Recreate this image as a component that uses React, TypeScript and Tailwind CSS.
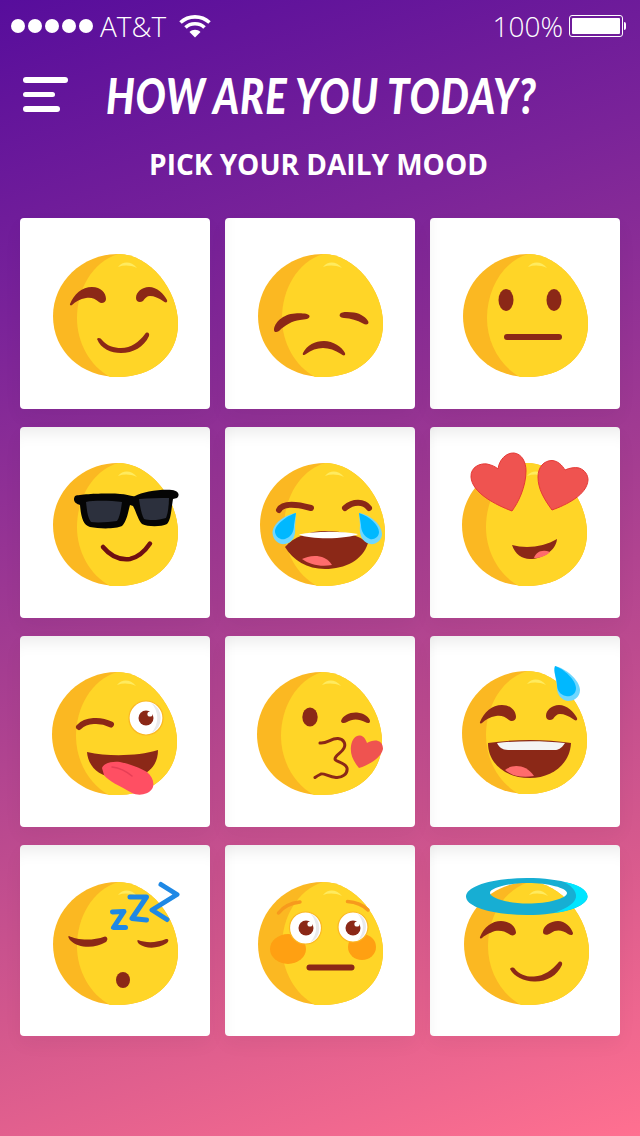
import React from "react";

const BROWN = "#8B2817";
const HAPPY_LEFT =
  "M50 86C54 76 62 69 72 69C81 69 86 75 86 81C86 85 81 86 79 84C75 80 70 79 66 80C60 81 55 84 52 87C51 88 49.500 87 50 86Z";
const HAPPY_RIGHT =
  "M116 80C116 74 122 69 129 69C137 69 144 76 147 82C148 85 145 85 143 83C139 80 134 78 130 78C127 78 125 80 123 83C120 85 116 84 116 80Z";

const Face = ({ x = 0, y = 0 }: { x?: number; y?: number }) => (
  <g transform={`translate(${x} ${y})`}>
    <path
      d="M98 36C130 36 158 72 158 106C158 138 132 159 98 159C62 159 33 134 33 98C33 64 62 36 98 36Z"
      fill="#FBB822"
    />
    <path
      d="M98 36C130 36 158 72 158 106C158 138 132 159 98 159L90 159C70 148 57 125 57 100C57 72 72 44 98 36Z"
      fill="#FFD527"
    />
    <path d="M98 49C103 43 111 43 117 50C110 47 104 47 98 49Z" fill="#FFEB5F" />
  </g>
);

const Eye = ({ cx, cy, r, px, py }: { cx: number; cy: number; r: number; px: number; py: number }) => (
  <g>
    <circle cx={cx} cy={cy} r={r} fill="#fff" stroke="#FBB822" strokeWidth="1.2" />
    <path
      d={`M${cx + r * 0.3} ${cy - r * 0.9}A${r} ${r} 0 0 1 ${cx + r * 0.3} ${cy + r * 0.9}A${r * 1.3} ${r * 1.3} 0 0 0 ${cx + r * 0.3} ${cy - r * 0.9}Z`}
      fill="#E9E9EB"
    />
    <circle cx={px} cy={py} r="7.500" fill={BROWN} />
    <circle cx={px + 4} cy={py - 4} r="2.600" fill="#fff" />
  </g>
);

const Card = ({ shade, children }: { shade: string; children: React.ReactNode }) => (
  <div className={`h-[191px] rounded-[4px] bg-white ${shade}`}>
    <svg viewBox="0 0 190 191" className="block h-[191px] w-[190px]">
      {children}
    </svg>
  </div>
);

const SHADE_FIRST = "shadow-[0_8px_20px_rgba(0,0,0,0.04)]";
const SHADE_SIDE = "shadow-[inset_14px_0_14px_-14px_rgba(0,0,0,0.05),0_8px_20px_rgba(0,0,0,0.04)]";
const SHADE_TOP = "shadow-[inset_0_20px_18px_-16px_rgba(0,0,0,0.09),0_8px_20px_rgba(0,0,0,0.04)]";
const SHADE_BOTH =
  "shadow-[inset_0_20px_18px_-16px_rgba(0,0,0,0.09),inset_14px_0_14px_-14px_rgba(0,0,0,0.05),0_8px_20px_rgba(0,0,0,0.04)]";

export default function App() {
  return (
    <div className="h-[1136px] w-[640px] overflow-hidden bg-[linear-gradient(162deg,#570d9c_0%,#7a2399_24%,#a53d91_50%,#d2578d_76%,#ff7090_100%)] font-['Open_Sans',sans-serif] text-white">
      {/* status bar */}
      <div className="flex h-[52px] items-center justify-between pl-[11px] pr-[14px]">
        <div className="flex items-center">
          <div className="flex gap-[3px]">
            <span className="h-[14px] w-[14px] rounded-full bg-white" />
            <span className="h-[14px] w-[14px] rounded-full bg-white" />
            <span className="h-[14px] w-[14px] rounded-full bg-white" />
            <span className="h-[14px] w-[14px] rounded-full bg-white" />
            <span className="h-[14px] w-[14px] rounded-full bg-white" />
          </div>
          <span className="ml-[7px] text-[28px] leading-none font-light">AT&amp;T</span>
          <svg viewBox="0 0 32 24" className="ml-[13px] h-[24px] w-[32px]" fill="none" stroke="#fff" strokeWidth="3.600">
            <path d="M1.500 8.500C9.500 1 22.500 1 30.500 8.500" />
            <path d="M6.500 13.500C11.500 8.500 20.500 8.500 25.500 13.500" />
            <path d="M16 23.500L10.500 18C13.500 15 18.500 15 21.500 18Z" fill="#fff" stroke="none" />
          </svg>
        </div>
        <div className="flex items-center">
          <span className="text-[28px] leading-none font-light">100%</span>
          <div className="ml-[6px] flex items-center">
            <div className="h-[22px] w-[54px] rounded-[3px] border border-white p-[2px]">
              <div className="h-full w-full rounded-[1px] bg-white" />
            </div>
            <div className="ml-[1px] h-[8px] w-[2px] rounded-r-[2px] bg-white" />
          </div>
        </div>
      </div>

      {/* header */}
      <div className="mt-[25px] flex h-[35px] items-center pl-[23px]">
        <div className="flex w-[45px] flex-col gap-[9px]">
          <span className="h-[6px] w-[45px] rounded-full bg-white" />
          <span className="h-[5px] w-[32px] rounded-full bg-white" />
          <span className="h-[6px] w-[37px] rounded-full bg-white" />
        </div>
        <h1 className="ml-[38px] origin-left whitespace-nowrap font-['Lato',sans-serif] text-[50px] leading-none font-black tracking-[1px] italic [transform:scaleX(0.8)]">
          HOW ARE YOU TODAY?
        </h1>
      </div>

      <h2 className="mt-[34px] pr-[3px] text-center text-[28px] leading-[37px] font-bold">PICK YOUR DAILY MOOD</h2>

      {/* mood grid */}
      <div className="mt-[35px] grid grid-cols-3 gap-x-[15px] gap-y-[18px] px-[20px]">
        <Card shade={SHADE_FIRST}>
          <Face />
          <path d={HAPPY_LEFT} fill={BROWN} />
          <path d={HAPPY_RIGHT} fill={BROWN} />
          <path
            d="M77 121C78 119 81 120 82 122C87 128 94 130 101 130C111 130 119 124 125 116C127 113 130 115 129 118C124 129 113 135 101 135C91 135 81 131 77 121Z"
            fill={BROWN}
          />
        </Card>

        <Card shade={SHADE_SIDE}>
          <Face />
          <path
            d="M49 112C49 105 58 96 70 95.500C76 95 84 95.500 84.500 98C85 101 80 101.500 75 102C67 103 60 107 54 113C51 115 49 114 49 112Z"
            fill={BROWN}
          />
          <path
            d="M115 96C116 93.500 124 94 129 94.500C136 95.500 142 100 143.500 104C143.500 107 140.500 107 138 105.500C132 102 126 100.500 119 100C115 99.500 114 98 115 96Z"
            fill={BROWN}
          />
          <path
            d="M78 135C82 127 90 123 99 123C108 123 117 129 120 135C121 138 118 138 116 136C110 132 104 130 98 130C92 130 86 132 81 136C79 138 77 137 78 135Z"
            fill={BROWN}
          />
        </Card>

        <Card shade={SHADE_SIDE}>
          <Face />
          <ellipse cx="76" cy="82" rx="7.500" ry="11" fill={BROWN} />
          <ellipse cx="124" cy="82" rx="7.500" ry="11" fill={BROWN} />
          <rect x="74" y="116" width="58" height="6" rx="3" fill={BROWN} />
        </Card>

        <Card shade={SHADE_TOP}>
          <Face />
          <path
            d="M55 69C60 67 90 66 100 67C106 67 112 70 115 69C122 65 140 62 152 63C159 64 160 68 157 71L153 72C151 84 151 93 147 97C141 100 128 100 122 97C118 93 116 84 113 79L110 78C108 85 107 94 102 99C96 102 80 102 70 100C63 98 61 90 60 78C56 77 52 74 55 69Z"
            fill="#050505"
          />
          <path d="M66 75C76 73 92 74 102 75C101 82 100 90 97 94C90 95 78 96 71 95C67 90 67 82 66 75Z" fill="#2C303D" />
          <path d="M119 72C128 71 140 71 149 71C149 78 148 86 146 91C140 93 130 94 124 92C121 86 120 79 119 72Z" fill="#2C303D" />
          <path d="M83 120C92 131 102 133 110 132C119 130 125 124 130 116.500" fill="none" stroke="#6F0F12" strokeWidth="4.500" strokeLinecap="round" />
        </Card>

        <Card shade={SHADE_BOTH}>
          <Face x={2} />
          <path d="M54 83C57 77 68 76 86 81" fill="none" stroke={BROWN} strokeWidth="6" strokeLinecap="round" />
          <path d="M120 81C128 74 139 74 144 81" fill="none" stroke={BROWN} strokeWidth="6" strokeLinecap="round" />
          <path d="M60 120C68 110 85 104 100 104C118 104 134 108 143 116C138 133 120 142 100 142C82 142 68 133 60 120Z" fill={BROWN} />
          <path d="M74 107.500C90 104 115 104 133 107C125 112 85 113 74 107.500Z" fill="#fff" />
          <path d="M77 132C84 128 100 126 107 138C96 140 85 138 77 132Z" fill="#FF6C6C" />
          <path d="M71 86C60 88 48 96 47.500 106C48 114 55 118 60 117C68 116 71 108 70 100Z" fill="#6FD7FF" />
          <path d="M71 86C62 89 50 97 50 105C51 111 56 113 60 112C66 110 69 105 69 98Z" fill="#00B8FF" />
          <path d="M134 86C146 88 157 98 157 107C157 114 150 118 145 117C136 115 134 106 135 98Z" fill="#6FD7FF" />
          <path d="M134 86C144 89 154 98 154 105C154 110 149 113 145 112C139 110 136 104 136 98Z" fill="#00B8FF" />
        </Card>

        <Card shade={SHADE_BOTH}>
          <Face x={-1} />
          <path
            d="M82 84C66 78 42 66 41 50C40.500 40 50 36 57 37C62 38 66 40 68 42C69 33 76 25.500 84 26C92 27 96 35 96 44C96 60 88 76 82 84Z"
            fill="#EF5350"
            stroke="#E53935"
            strokeWidth="1"
          />
          <path
            d="M122 83C114 72 108 62 108 50C108 40 114 33.500 122 33.500C128 34 132 38 135 43C139 41 145 40 149 41C155 43 158 48 158 53C157 68 136 78 122 83Z"
            fill="#EF5350"
            stroke="#E53935"
            strokeWidth="1"
          />
          <path d="M82 118C96 122 114 120 127 112C126 124 112 132 100 132C92 132 85 127 82 118Z" fill={BROWN} />
          <path d="M104 131C106 125 112 122 120 125C116 129 110 131 104 131Z" fill="#FF6C6C" />
        </Card>

        <Card shade={SHADE_TOP}>
          <Face x={-1} />
          <path d="M59 91C66 84 80 83 91 88.500" fill="none" stroke={BROWN} strokeWidth="6" strokeLinecap="round" />
          <Eye cx={126} cy={82} r={17} px={126} py={82} />
          <path d="M67 116C90 121 118 120 138 114C138 128 130 136 120 140L95 142C78 140 68 130 67 116Z" fill={BROWN} />
          <path
            d="M82 132C84 127 92 125 100 126C110 128 120 132 127 136C133 141 135 148 132 153C128 159 118 160 112 157C100 150 88 145 84 139Z"
            fill="#FF4F63"
          />
          <path d="M92 131C100 132 106 135 112 140" fill="none" stroke="#E63F56" strokeWidth="1.500" strokeLinecap="round" />
        </Card>

        <Card shade={SHADE_BOTH}>
          <Face x={-1} />
          <ellipse cx="85" cy="81" rx="7.700" ry="9.500" fill={BROWN} />
          <path
            d="M116 85C118 79 125 76 132 76.500C139 77 145 82 145 85C145 88 142 87 140 86C134 82.500 127 82.500 122 86C119 88 116 87 116 85Z"
            fill={BROWN}
          />
          <path
            d="M95 107C102 108 106 102 113 102.500C119 103 121 108 119 112C117 117 110 119 110 123C110 126 120 126 122 132C123 138 117 142 111 141.500C104 141 99 137 96 138C94 139 92 140 90 141.500"
            fill="none"
            stroke={BROWN}
            strokeWidth="3"
            strokeLinecap="round"
            strokeLinejoin="round"
          />
          <path
            d="M134 132C128 125 125 118 126 110C127 103 131 99 135 99.500C139 100 141 104 142 107C145 105 150 104 153 105C157 106 158 110 158 113C156 122 144 129 134 132Z"
            fill="#EF5350"
          />
        </Card>

        <Card shade={SHADE_BOTH}>
          <Face x={-1} y={-1} />
          <path d={HAPPY_LEFT} fill={BROWN} />
          <path d={HAPPY_RIGHT} fill={BROWN} />
          <path d="M58 107C85 103 115 103 141 107C140 128 122 142 100 142C76 142 58 128 58 107Z" fill={BROWN} />
          <path d="M67 107C90 104.500 112 104.500 135 107C131 113 128 114 125 114L78 114C72 114 69 111 67 107Z" fill="#F4F4F4" />
          <path d="M75 134C82 128 96 128 104 140C92 142 82 140 75 134Z" fill="#FF6C6C" />
          <path d="M125 30C135 32 150 44 150 54C150 62 143 65 138 65C131 64 127 58 127 52C127 44 123 36 125 30Z" fill="#6FD7FF" />
          <path d="M125 30C134 33 146 44 146 52C146 59 140 61 136 60C130 59 127 54 127 49C127 42 123 36 125 30Z" fill="#00B8FF" />
        </Card>

        <Card shade={SHADE_TOP}>
          <Face y={1} />
          <path d="M49 91C55 94 70 97 85 91.500C88 92 88 95 86 97C75 104 58 103 51 96C48 93 48 91 49 91Z" fill={BROWN} />
          <path d="M118 95C126 98 136 98 146 94C149 94 149 96 147 98C138 104 126 104 119 99C117 97 117 95 118 95Z" fill={BROWN} />
          <ellipse cx="103" cy="135" rx="7" ry="8" fill={BROWN} />
          <g fill="none" stroke="#1E88E5" strokeWidth="5" strokeLinecap="round" strokeLinejoin="round">
            <path d="M92.500 67L104 66.500L93.500 82.500L105.500 82.500" />
            <path d="M110 52L126.500 52L112 73.500L126.500 75" />
            <path d="M141 39.500L157 49.500L132 65L147 74.500" />
          </g>
        </Card>

        <Card shade={SHADE_BOTH}>
          <Face y={1} />
          <ellipse cx="63" cy="104" rx="18" ry="15" fill="#FFA012" />
          <ellipse cx="137" cy="102" rx="14" ry="13" fill="#FFA012" />
          <path d="M53.500 68C58 62 66 58 75 57" fill="none" stroke="#F79A1D" strokeWidth="3.500" strokeLinecap="round" />
          <path d="M122.500 56.500C130 57 138 60 143 65" fill="none" stroke="#F79A1D" strokeWidth="3.500" strokeLinecap="round" />
          <Eye cx={80.500} cy={83} r={16} px={81} py={83} />
          <Eye cx={128} cy={82} r={15} px={128} py={83} />
          <rect x="81.500" y="119.500" width="48" height="6" rx="3" fill={BROWN} />
        </Card>

        <Card shade={SHADE_BOTH}>
          <Face x={1} y={1} />
          <path
            d="M50 92C54 82 62 76 71 76C80 76 86 82 86 88C85 91 81 91 79 89C75 86 70 85 65 86C59 88 54 91 52 93C51 94 49.500 93 50 92Z"
            fill={BROWN}
          />
          <path
            d="M113 87C113 81 120 76 128 76C135 76 141 82 143 88C143 91 140 90 138 89C133 85 126 84 121 88C117 91 113 90 113 87Z"
            fill={BROWN}
          />
          <path
            d="M80 124C81 122 84 122 85 124C90 130 97 132 104 131.500C114 131 122 125 128 118C130 115 133 117 132 120C127 131 116 137 104 136.500C94 136 84 132 80 124Z"
            fill={BROWN}
          />
          <path
            fillRule="evenodd"
            d="M36 51.500C36 41 63 33 97 33C131 33 157.500 41 157.500 51.500C157.500 62 131 70 97 70C63 70 36 62 36 51.500ZM60 48C60 53 78 58.500 98 58.500C118 58.500 137 53.500 137 48C137 43 118 38 98 38C78 38 60 43 60 48Z"
            fill="#17AED3"
          />
          <path d="M134 37C148 39 157.500 45 157.500 51.500C157.500 59 142 66 124 68C138 63 147 57 146 50C145 44 140 40 134 37Z" fill="#00E5FF" />
        </Card>
      </div>
    </div>
  );
}
